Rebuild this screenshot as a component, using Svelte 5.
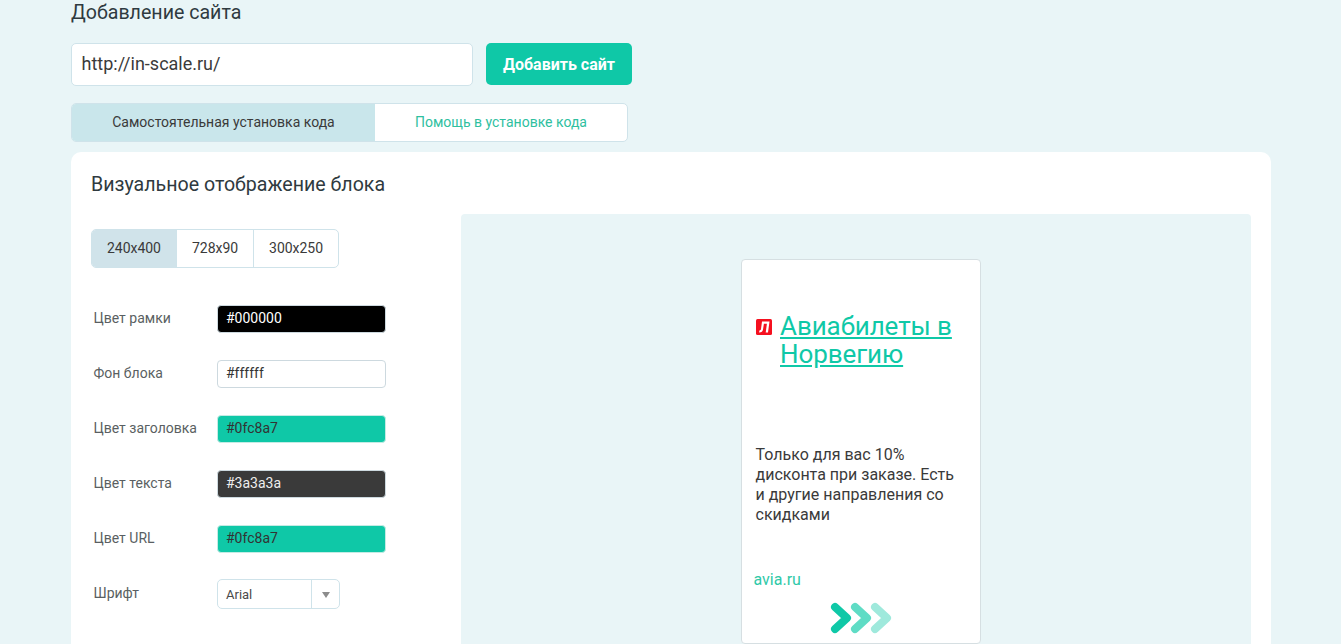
<script>
    let sizes = ['240x400', '728x90', '300x250'];
    let colors = [
        { label: 'Цвет рамки', value: '#000000', cls: 'black' },
        { label: 'Фон блока', value: '#ffffff', cls: 'white' },
        { label: 'Цвет заголовка', value: '#0fc8a7', cls: 'green' },
        { label: 'Цвет текста', value: '#3a3a3a', cls: 'dark' },
        { label: 'Цвет URL', value: '#0fc8a7', cls: 'green' }
    ];
</script>

<div class="page">
    <h1 class="page-title">Добавление сайта</h1>

    <div class="add-row">
        <div class="url-input">http://in-scale.ru/</div>
        <button class="add-btn">Добавить сайт</button>
    </div>

    <div class="tabs">
        <div class="tab active">Самостоятельная установка кода</div>
        <div class="tab">Помощь в установке кода</div>
    </div>

    <div class="card">
        <h2 class="card-title">Визуальное отображение блока</h2>

        <div class="card-body">
            <div class="settings">
                <div class="sizes">
                    {#each sizes as size, i}
                        <div class="size" class:active={i === 0}>{size}</div>
                    {/each}
                </div>

                <div class="rows">
                    {#each colors as color}
                        <div class="row">
                            <span class="row-label">{color.label}</span>
                            <div class="swatch {color.cls}">{color.value}</div>
                        </div>
                    {/each}
                    <div class="row row-select">
                        <span class="row-label">Шрифт</span>
                        <div class="select">
                            <span class="select-value">Arial</span>
                            <span class="select-arrow"></span>
                        </div>
                    </div>
                </div>
            </div>

            <div class="preview">
                <div class="ad">
                    <div class="ad-head">
                        <svg class="ad-icon" width="16" height="16" viewBox="0 0 16 16">
                            <rect width="16" height="16" rx="1.500" fill="#f5101f" />
                            <path d="M6 2.500h7.500L12 13.500H9.700l1.200-8.800H7.900L7 10.500c-.3 2-1.400 3-3.900 3l.3-2.100c1 0 1.400-.4 1.600-1.400z" fill="#fff" />
                        </svg>
                        <a class="ad-title" href="#top">Авиабилеты в Норвегию</a>
                    </div>
                    <p class="ad-text">Только для вас 10% дисконта при заказе. Есть и другие направления со скидками</p>
                    <div class="ad-url">avia.ru</div>
                    <svg class="ad-arrows" width="62" height="32" viewBox="0 0 62 32">
                        <path d="M5 5l12 11L5 27" class="chev" stroke="#0fc8a7" />
                        <path d="M25 5l12 11-12 11" class="chev" stroke="#5fdcc5" />
                        <path d="M45 5l12 11-12 11" class="chev" stroke="#9fe9dc" />
                    </svg>
                </div>
            </div>
        </div>
    </div>
</div>

<style>
    :global(body) {
        margin: 0;
        background: #e9f5f7;
        overflow: hidden;
    }

    .page {
        height: 644px;
        overflow: hidden;
        box-sizing: border-box;
        width: 1200px;
        margin-left: 71px;
        font-family: Roboto, sans-serif;
        color: #3a3a3a;
    }

    .page-title {
        margin: 0;
        height: 43px;
        font-size: 19.6px;
        line-height: 26px;
        font-weight: 400;
        color: #2f3a40;
    }

    .add-row {
        display: flex;
        align-items: flex-start;
        gap: 13px;
    }

    .url-input {
        width: 402px;
        height: 43px;
        box-sizing: border-box;
        padding: 0 9.500px;
        background: #fff;
        border: 1px solid #cfe3ea;
        border-radius: 5px;
        font-size: 18px;
        line-height: 39px;
        color: #3a3a3a;
    }

    .add-btn {
        width: 146px;
        height: 42px;
        padding: 0;
        background: #0fc8a7;
        border: 0;
        border-radius: 5px;
        color: #fff;
        font-family: inherit;
        font-size: 16px;
        font-weight: 700;
    }

    .tabs {
        display: flex;
        width: 557px;
        height: 39px;
        margin-top: 17px;
        box-sizing: border-box;
        background: #fff;
        border: 1px solid #cfe3ea;
        border-radius: 5px;
        overflow: hidden;
    }

    .tab {
        flex: 1;
        text-align: center;
        font-size: 14px;
        line-height: 37px;
        color: #2fc09f;
    }

    .tab.active {
        flex: 0 0 303px;
        background: #c9e6eb;
        color: #3a3a3a;
    }

    .card {
        margin-top: 10px;
        padding: 20px;
        height: 600px;
        box-sizing: border-box;
        background: #fff;
        border-radius: 10px;
    }

    .card-title {
        margin: 0;
        font-size: 19.6px;
        line-height: 26px;
        font-weight: 400;
        color: #2f3a40;
    }

    .card-body {
        display: flex;
        margin-top: 16px;
    }

    .settings {
        width: 370px;
        flex: none;
        padding-top: 15px;
    }

    .sizes {
        display: inline-flex;
        height: 39px;
        box-sizing: border-box;
        border: 1px solid #cfe3ea;
        border-radius: 5px;
        overflow: hidden;
    }

    .size {
        padding: 0 15px;
        font-size: 14px;
        letter-spacing: -0.03px;
        line-height: 37px;
        border-left: 1px solid #cfe3ea;
    }

    .size:first-child {
        border-left: 0;
    }

    .size.active {
        background: #d0e3ea;
    }

    .rows {
        display: flex;
        flex-direction: column;
        gap: 27px;
        margin-top: 37px;
    }

    .row {
        display: flex;
        align-items: flex-start;
        height: 28px;
        padding-left: 3px;
    }

    .row-select {
        margin-top: -1px;
    }

    .row-label {
        width: 123px;
        flex: none;
        margin-left: -0.5px;
        margin-right: 0.5px;
        font-size: 14px;
        line-height: 26px;
        color: #5a5f62;
    }

    .row-select .row-label {
        line-height: 28px;
    }

    .swatch {
        width: 169px;
        height: 28px;
        box-sizing: border-box;
        padding: 0 8px;
        border: 1px solid #cdd9df;
        border-radius: 4px;
        font-size: 14px;
        line-height: 25px;
    }

    .swatch.black {
        background: #000;
        color: #fff;
    }

    .swatch.white {
        background: #fff;
        color: #333;
    }

    .swatch.green {
        background: #0fc8a7;
        border-color: #c4ebe4;
        color: #333;
    }

    .swatch.dark {
        background: #3a3a3a;
        color: #eee;
    }

    .select {
        display: flex;
        width: 123px;
        height: 30px;
        box-sizing: border-box;
        border: 1px solid #cfe3ea;
        border-radius: 5px;
    }

    .select-value {
        width: 93px;
        padding-left: 8px;
        box-sizing: border-box;
        font-size: 13px;
        line-height: 29px;
        color: #4a4a4a;
    }

    .select-arrow {
        flex: 1;
        position: relative;
        border-left: 1px solid #cfe3ea;
    }

    .select-arrow::after {
        content: "";
        position: absolute;
        left: 10px;
        top: 12px;
        border-left: 4px solid transparent;
        border-right: 4px solid transparent;
        border-top: 6px solid #8c8c8c;
    }

    .preview {
        flex: 1;
        height: 500px;
        padding-top: 45px;
        box-sizing: border-box;
        background: #e9f5f7;
        border-radius: 4px;
    }

    .ad {
        display: flex;
        flex-direction: column;
        width: 240px;
        height: 385px;
        margin-left: 280px;
        box-sizing: border-box;
        padding: 0 14px;
        background: #fff;
        border: 1px solid #d6dfe2;
        border-radius: 4px;
    }

    .ad-head {
        display: flex;
        align-items: flex-start;
        margin-top: 52px;
    }

    .ad-icon {
        flex: none;
        margin-top: 7px;
        margin-right: 8px;
    }

    .ad-title {
        font-size: 26px;
        line-height: 28px;
        letter-spacing: -0.08px;
        color: #0fc8a7;
    }

    .ad-text {
        margin: 77px 0 0 -0.5px;
        font-size: 16px;
        line-height: 20px;
        color: #3a3a3a;
    }

    .ad-url {
        margin-top: 45px;
        margin-left: -2.500px;
        font-size: 16px;
        line-height: 20px;
        color: #2fc9a8;
    }

    .ad-arrows {
        align-self: center;
        margin-top: 12px;
    }

    .chev {
        fill: none;
        stroke-width: 8;
        stroke-linecap: round;
        stroke-linejoin: round;
    }
</style>
